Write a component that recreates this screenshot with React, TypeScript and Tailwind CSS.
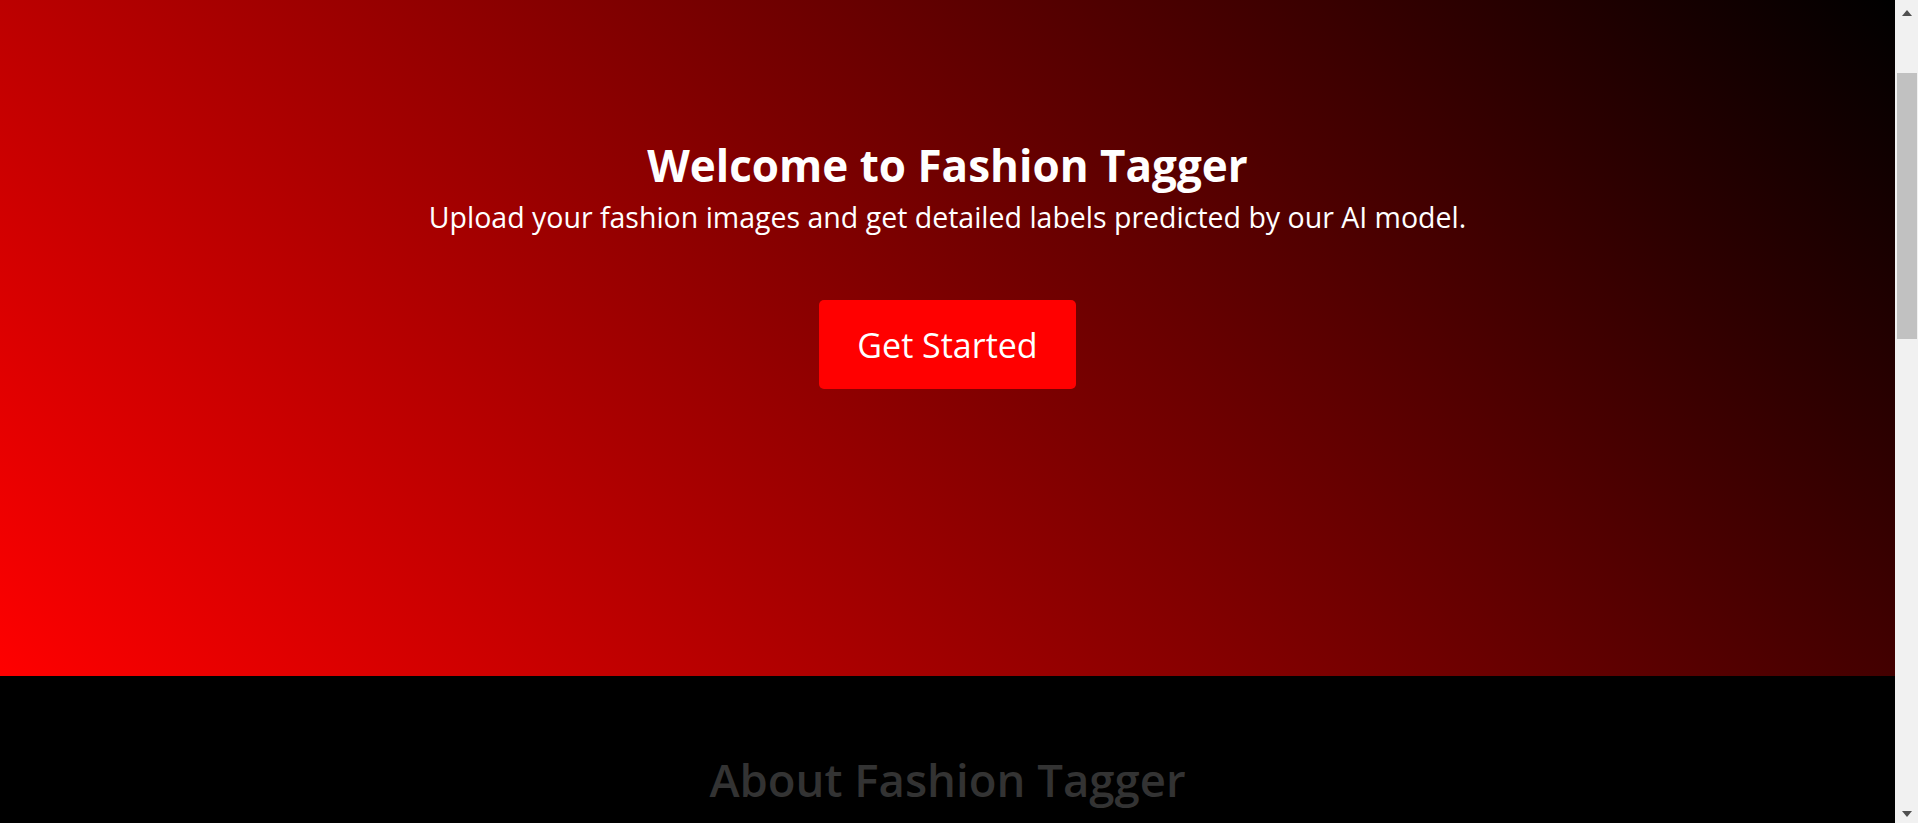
import React from 'react';

function Scrollbar() {
  return (
    <aside className="w-[23px] h-full flex flex-col items-center bg-[#f1f1f1]">
      <svg width="10" height="6" viewBox="0 0 10 6" className="mt-[10px] shrink-0">
        <path d="M5 0 L10 6 L0 6 Z" fill="#505050" />
      </svg>
      <div className="mt-[57px] w-[20px] ml-[1px] h-[266px] bg-[#c1c1c1]" />
      <svg width="10" height="6" viewBox="0 0 10 6" className="mt-auto mb-[6px] shrink-0">
        <path d="M0 0 L10 0 L5 6 Z" fill="#505050" />
      </svg>
    </aside>
  );
}

export default function App() {
  return (
    <div className="h-screen flex bg-black font-['Open_Sans',sans-serif]">
      <main className="flex-1 overflow-hidden">
        {/* Hero */}
        <section className="h-[676px] bg-[linear-gradient(45deg,#ff0000,#000000)] flex flex-col items-center pt-[136px] text-center text-white">
          <h1 className="text-[44px] leading-[58px] font-bold">Welcome to Fashion Tagger</h1>
          <p className="text-[28.5px] leading-[35px] mt-[6px]">
            Upload your fashion images and get detailed labels predicted by our AI model.
          </p>
          <button className="mt-[65px] h-[89px] px-[38px] bg-[#ff0000] rounded-[5px] text-[34px] leading-none text-white">
            Get Started
          </button>
        </section>

        {/* About */}
        <section className="bg-black flex flex-col items-center pt-[74px] pb-[200px] text-center">
          <h2 className="text-[45.5px] leading-[58px] font-semibold text-[#333333]">About Fashion Tagger</h2>
          <p className="mt-6 max-w-[900px] text-[22px] leading-[34px] text-[#333333]">
            Fashion Tagger uses a deep learning model trained on thousands of fashion images to recognise
            garment types, colours, patterns and styles. Simply upload a photo and receive a detailed set of
            labels in seconds.
          </p>
        </section>
      </main>
      <Scrollbar />
    </div>
  );
}
